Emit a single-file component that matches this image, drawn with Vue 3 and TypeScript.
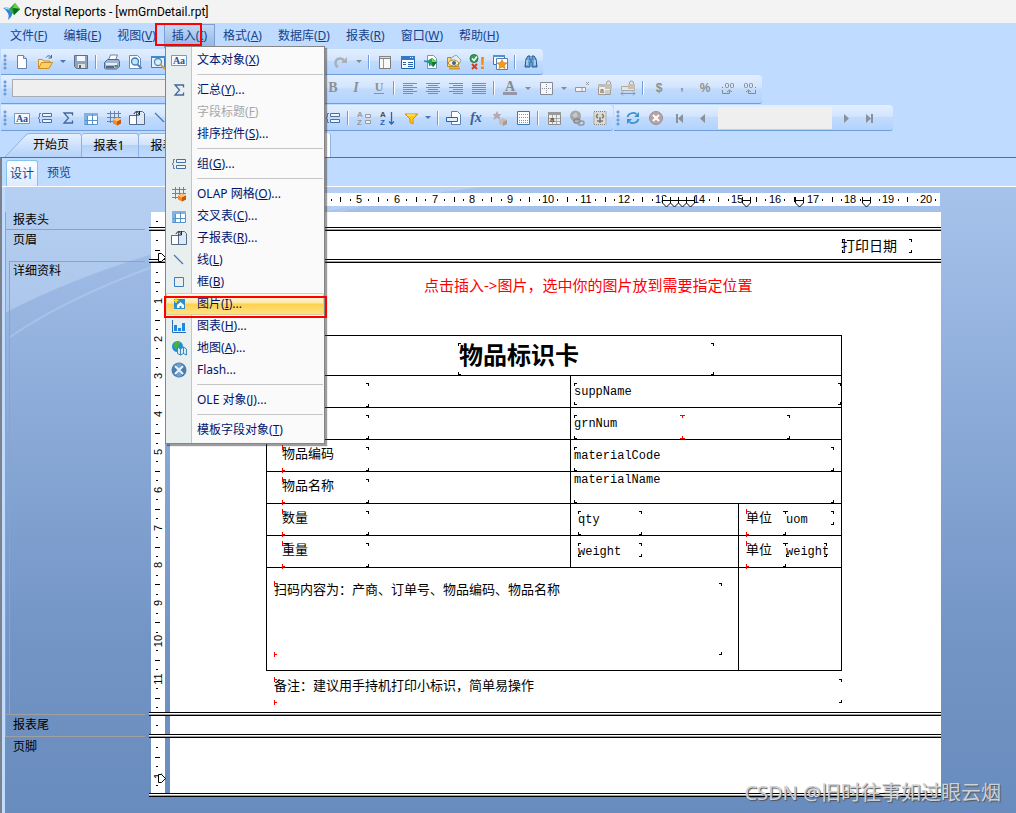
<script setup lang="ts">
interface Tool { icon?: string; kind?: 'sep' | 'caret' | 'spare'; off?: boolean; label?: string }
interface MenuEntry { text?: string; key?: string; tail?: string; icon?: string; off?: boolean; hot?: boolean }
interface Field { x: number; y: number; text: string; kind?: string }
type Mark = [number, number, string]

const icons: Record<string, string> = {
  new: '<path d="M3.5 1.5h6l3 3v10h-9z" fill="#fff" stroke="#6484ae"/><path d="M9.500 1.500v3h3" fill="#cfe0f5" stroke="#6484ae"/>',
  open: '<path d="M1.500 14.500v-9h4l1 1.500h6v2" fill="#ffe9a0" stroke="#c98f2c"/><path d="M1.500 14.500l3-6h11l-3.500 6z" fill="#ffcf5e" stroke="#c98f2c"/><path d="M9 3.500c2-2.500 4-2 5.500 0M14.500 1v3h-3" fill="none" stroke="#44658f"/>',
  save: '<path d="M1.500 1.500h13v13h-11l-2-2z" fill="#8ea3c0" stroke="#5a7092"/><path d="M4 2h8v5h-8z" fill="#f4f7fb"/><path d="M5 10h7v4h-7z" fill="#e4e2d8"/><path d="M6 11h2v3h-2z" fill="#4d6384"/>',
  print: '<path d="M4.500 6l2-5h7l-2 5z" fill="#fff" stroke="#6b83a5"/><path d="M.500 8.500l3-3h11l1 2v5l-3 2.500h-11l-1-1z" fill="#9fb4d0" stroke="#51698d"/><path d="M2 9h11v2h-11z" fill="#e8edf5"/><path d="M11 11h3v2h-3z" fill="#29a94a"/><path d="M2 12h8v2h-8z" fill="#51698d"/>',
  preview: '<path d="M2.500 1.500h8l3 3v10h-11z" fill="#fff" stroke="#6d8db8"/><circle cx="8" cy="7.500" r="3.500" fill="#bfe4fa" stroke="#3d7cba" stroke-width="1.300"/><path d="M10.500 10.500l4 4" stroke="#4d7fb8" stroke-width="2"/>',
  find2: '<path d="M1.500 2.500h13v11h-13z" fill="#e6f1fc" stroke="#3f7dbb"/><path d="M1 2h14v2h-14z" fill="#3f8bcf"/><circle cx="8" cy="8" r="3.500" fill="#d8effc" stroke="#4d8bbd" stroke-width="1.300"/><path d="M10.500 10.500l4.500 4.500" stroke="#e09b32" stroke-width="2"/>',
  redo: '<path d="M5 13a4.500 4.500 0 1 1 6-6" fill="none" stroke="#a9b0ba" stroke-width="2.500"/><path d="M14 3v6h-6z" fill="#a9b0ba"/>',
  panel: '<path d="M2.500 2.500h11v12h-11z" fill="#f8f8f8" stroke="#7c7c7c"/><path d="M2 2h12v3h-12z" fill="#858585"/><path d="M3 3h10v1h-10z" fill="#ddd"/><path d="M6.500 5v9" stroke="#999"/>',
  explorer: '<path d="M1.500 2.500h13v12h-13z" fill="#fff" stroke="#2165ad"/><path d="M1 2h14v4h-14z" fill="#3579c5"/><path d="M10 3h1v1h-1zM12 3h1v1h-1z" fill="#fff"/><path d="M3 8.500h3M8 8.500h5M3 10.500h3M8 10.500h5M8 12.500h5" stroke="#2464b0"/>',
  export: '<path d="M4.500 1.500h6l3 3v10h-9z" fill="#fff" stroke="#7694b9"/><path d="M4 7l5-3 5 4-4 5-3-3z" fill="#1da84a"/><path d="M9 4l5 4-5 0z" fill="#7ad45b"/><path d="M9 8h5l-4 5z" fill="#0e7436"/><path d="M1 7l5 1 1 4" fill="none" stroke="#287fd1" stroke-width="1.500"/>',
  fieldx: '<path d="M1.500 12.500v-9h5l1 2h5v7z" fill="#ffd869" stroke="#bd8528"/><path d="M5 4l5-3 5 5-2 4-8-2z" fill="#d9f0fb" stroke="#87a7bd"/><path d="M2 9c3-4 8-4 11 0-3 4-8 4-11 0z" fill="#fff4cb" stroke="#b88533"/><circle cx="8" cy="9" r="2" fill="#34699e"/><path d="M3 14.500h11" stroke="#d09c21" stroke-width="2"/>',
  check: '<circle cx="5" cy="4.500" r="4" fill="#3a9e59" stroke="#267544"/><path d="M3 4.500l2 2 3-4" fill="none" stroke="#fff" stroke-width="1.500"/><path d="M3 10l5 5M8 10l-5 5" stroke="#e23a10" stroke-width="2"/><path d="M12 3h3l-.5 8h-2zM12 12.500h3v2.500h-3z" fill="#ef8f0b"/>',
  star: '<path d="M1.500 1.500h11v9h-11z" fill="#fff" stroke="#3579bd"/><path d="M1 1h12v2h-12z" fill="#4d94d8"/><path d="M4.500 4.500h11v11h-11z" fill="#fff" stroke="#5b7fa8"/><path d="M10 5.500l1.500 3 3.500.5-2.500 2.300.6 3.200-3.100-1.500-3.100 1.500.6-3.200L5 9l3.500-.5z" fill="#f29a1c" stroke="#c36f11" stroke-width=".5"/>',
  binoculars: '<path d="M2 13l1-8 2-3h2v4h2v-4h2l2 3 1 8h-5v-5h-2v5z" fill="#72a7da" stroke="#1d568f"/><path d="M4 6v5M12 6v5" stroke="#dcf0ff"/>',
  bold: '<text x="8" y="12" text-anchor="middle" font-family="Liberation Serif,serif" font-size="14" font-weight="700" fill="#8c9097">B</text>',
  italic: '<text x="8" y="12" text-anchor="middle" font-family="Liberation Serif,serif" font-size="14" font-weight="700" font-style="italic" fill="#8c9097">I</text>',
  under: '<text x="8" y="11" text-anchor="middle" font-family="Liberation Serif,serif" font-size="12" font-weight="700" fill="#8c9097">U</text><path d="M3 13.500h10" stroke="#8c9097"/>',
  left: '<path d="M1 3.500h14M1 5.500h10M1 7.500h14M1 9.500h10M1 11.500h14M1 13.500h10" stroke="#858b94"/>',
  center: '<path d="M1 3.500h14M3 5.500h10M1 7.500h14M3 9.500h10M1 11.500h14M3 13.500h10" stroke="#858b94"/>',
  right: '<path d="M1 3.500h14M5 5.500h10M1 7.500h14M5 9.500h10M1 11.500h14M5 13.500h10" stroke="#858b94"/>',
  justify: '<path d="M1 3.500h14M1 5.500h14M1 7.500h14M1 9.500h14M1 11.500h14M1 13.500h14" stroke="#858b94"/>',
  color: '<text x="8" y="11" text-anchor="middle" font-family="Liberation Serif,serif" font-size="14" font-weight="700" fill="#858b94">A</text><path d="M1 12h14v3h-14z" fill="#9795a9"/>',
  border: '<path d="M2.500 2.500h12v12h-12z" fill="#f4f6f9" stroke="#858b94"/><path d="M8.500 4v9M4 8.500h9" stroke="#858b94" stroke-dasharray="1 1"/>',
  hide: '<path d="M1.500 7.500h10v4h-10z" fill="#f4f4f4" stroke="#999"/><path d="M8 8v4M12 2l3 3M15 2l-3 3" stroke="#999"/>',
  lockf: '<path d="M1.500 4.500h12v10h-12z" fill="#eee" stroke="#999"/><path d="M1 4h13v3h-13z" fill="#bbb"/><text x="3" y="13" font-family="Liberation Sans,sans-serif" font-size="7" font-weight="700" fill="#777">a</text><path d="M8 11h6M8 13h6" stroke="#aaa"/><path d="M9.500 5v-2a2 2 0 0 1 4 0v2" fill="none" stroke="#a29b90"/><path d="M8 4h7v5h-7z" fill="#c9c0b3"/>',
  locks: '<path d="M1.500 6.500h13v4h-13z" fill="#e5e5e5" stroke="#aaa"/><path d="M9.500 4v-1a2 2 0 0 1 4 0v1" fill="none" stroke="#a29b90"/><path d="M8 4h7v5h-7z" fill="#c9c0b3"/><path d="M1 13.500h14M3 11.500l-2 2 2 2M13 11.500l2 2-2 2" fill="none" stroke="#8e949d"/>',
  money: '<text x="8" y="12" text-anchor="middle" font-family="Liberation Sans,sans-serif" font-size="12" font-weight="700" fill="#8c9097">$</text>',
  comma: '<text x="8" y="10" text-anchor="middle" font-family="Liberation Sans,sans-serif" font-size="12" font-weight="700" fill="#8c9097">,</text>',
  percent: '<text x="8" y="12" text-anchor="middle" font-family="Liberation Sans,sans-serif" font-size="12" font-weight="700" fill="#8c9097">%</text>',
  decup: '<path d="M2 7h1v1h-1z" fill="#777"/><rect x="5.500" y="3.500" width="3" height="4" rx="1" fill="none" stroke="#888"/><rect x="10.500" y="3.500" width="3" height="4" rx="1" fill="none" stroke="#888"/><path d="M2.500 10v3.500h7v-3M7 12l2.500-2 2.500 2" fill="none" stroke="#888"/>',
  decdown: '<path d="M12 7h1v1h-1z" fill="#777"/><rect x="1.500" y="3.500" width="3" height="4" rx="1" fill="none" stroke="#888"/><rect x="6.500" y="3.500" width="3" height="4" rx="1" fill="none" stroke="#888"/><path d="M12.500 10v3.500h-7v-3M3 12l2.500-2 2.500 2" fill="none" stroke="#888"/>',
  text: '<path d="M.5 3.500h15v10h-15z" fill="#f7fbff" stroke="#6d9ccd"/><text x="8" y="12" text-anchor="middle" font-family="Liberation Serif,serif" font-size="10" font-weight="700" fill="#2e5186">Aa</text>',
  group: '<path d="M4 3.500h-1.500v3.500l-1.500 1 1.500 1v3.500h1.500" fill="none" stroke="#5c79a5"/><path d="M5.500 3.500h9v3h-9zM5.500 9.500h9v3h-9z" fill="#eef5fd" stroke="#4b6ea0"/>',
  sum: '<path d="M12.500 5.500v-2.500h-8.500l4.500 5-4.500 5h8.500v-2.500" fill="none" stroke="#46679b" stroke-width="1.300"/>',
  cross: '<path d="M1.500 3.500h13v11h-13z" fill="#fff" stroke="#5593cd"/><path d="M1 3h14v3h-14zM1 3h3v11h-3z" fill="#7fb3e3"/><path d="M4.500 6v8M9.500 4v10M2 10.500h12" stroke="#5593cd"/>',
  olap: '<path d="M4.500 1v12M8.500 1v12M12.500 1v7M1 3.500h14M1 7.500h14M1 11.500h7" stroke="#6482b0"/><path d="M7 9.500l4-2 4 2v4l-4 2-4-2z" fill="#f28b2c"/><path d="M7 9.500l4-2 4 2-4 2z" fill="#ffc67a"/><path d="M11 11.500l4-2v4l-4 2z" fill="#c95413"/>',
  sub: '<path d="M7.500 1.500h6l2 2v11h-8z" fill="#dfe9f5" stroke="#51698d"/><path d="M.500 5.500h7v9h-7z" fill="#fff" stroke="#51698d"/><path d="M5 4c1-3 4-3 5 0M10.500 1v4h-3.500" fill="none" stroke="#222"/>',
  line: '<path d="M3 3l9 9" stroke="#4678b4" stroke-width="1.200"/>',
  box: '<path d="M3.500 3.500h9v9h-9z" fill="none" stroke="#3b7fc4"/>',
  picture: '<path d="M3 3h11v10h-11z" fill="#2c8dd2"/><path d="M6 12v-3l3.500-3 3.500 3v3h-2.500v-2h-2v2z" fill="#fff"/><path d="M5 2v5M2.500 4.500h5" stroke="#ffe22d" stroke-width="1.500"/>',
  chart: '<path d="M1.500 2v12.500h13.500" fill="none" stroke="#2b6cb4"/><path d="M3 7h3v6h-3zM7 10h3v3h-3zM11 5h3v8h-3z" fill="#1e88e5"/>',
  map: '<circle cx="6.500" cy="6.500" r="5.500" fill="#2b8bd6"/><path d="M3 3l4-2 3 2-3 2 1 3-3 1-2-3z" fill="#46b438"/><path d="M6.500 7l3 2 3-2 3 2v6l-3-1.500-3 1.500-3-1.500z" fill="#d4edfb" stroke="#3b8ab8"/><path d="M9.500 9v6M12.500 7v7" stroke="#3b8ab8"/>',
  flash: '<circle cx="8" cy="8" r="7.500" fill="#4b7cab"/><path d="M8 8l-3-6.500h6zM8 8l-3 6.500h6z" fill="#6fa2cf"/><path d="M4 4l8 8M12 4l-8 8" stroke="#e5f2fc" stroke-width="2.200"/>',
  azlist: '<text x="1" y="7" font-family="Liberation Sans,sans-serif" font-size="8" font-weight="700" fill="#999">A</text><text x="1" y="15" font-family="Liberation Sans,sans-serif" font-size="8" font-weight="700" fill="#999">Z</text><path d="M9.500 4.500h5v3h-5zM9.500 10.500h5v3h-5z" fill="#eee" stroke="#999"/>',
  az: '<text x="1" y="7" font-family="Liberation Sans,sans-serif" font-size="8" font-weight="700" fill="#4d4d4d">A</text><text x="1" y="15" font-family="Liberation Sans,sans-serif" font-size="8" font-weight="700" fill="#2c66ab">Z</text><path d="M12.500 2v12M10 11.500l2.500 2.500 2.500-2.500" fill="none" stroke="#2c66ab" stroke-width="1.300"/>',
  filter: '<path d="M3 4h13l-5 5v5l-3-1.500v-3.500z" fill="#ffc90e" stroke="#db8d0a"/><path d="M5 5h8" stroke="#fff3a6"/>',
  section: '<path d="M5.500 1.500h6l3 3v10h-9z" fill="#fff" stroke="#5b84b1"/><path d="M.5 7.500h11v4h-11z" fill="#e0efff" stroke="#2f5f9b"/>',
  fx: '<text x="7" y="12" text-anchor="middle" font-family="Liberation Serif,serif" font-size="14" font-style="italic" font-weight="700" fill="#3c5f93">fx</text>',
  wizard: '<path d="M5 1l1.500 3h3l-2 2 1 4-3.500-2-3.500 2 1-4-2-2h3z" fill="#b7a7b1"/><path d="M7 10l4-2 4 2v4l-4 2-4-2z" fill="#c7bdb4"/><path d="M11 12l4-2v4l-4 2z" fill="#a79c94"/>',
  grid: '<path d="M2.500 1.500h12v13h-12z" fill="#fff" stroke="#3c76b4"/><path d="M4 4.500h9M4 7.500h9M4 10.500h9M4 12.500h9" stroke="#5fa0d8" stroke-dasharray="1 1"/>',
  tablea: '<path d="M2.500 2.500h12v12h-12z" fill="#eee" stroke="#8d8d8d"/><path d="M2 2h13v3h-13z" fill="#9a9a9a"/><path d="M6.500 5v9M10.500 5v9M3 8.500h11M3 11.500h11" stroke="#aaa"/><text x="4" y="12" font-family="Liberation Sans,sans-serif" font-size="8" font-weight="700" fill="#555">a</text>',
  link: '<circle cx="6.500" cy="6" r="5.500" fill="#a4a8ab"/><path d="M3 5l4-3 2 4-3 2z" fill="#c5c9c5"/><rect x="5" y="9" width="6" height="4" rx="2" fill="none" stroke="#888" stroke-width="1.500"/><rect x="9" y="11" width="6" height="4" rx="2" fill="none" stroke="#999" stroke-width="1.500"/>',
  stamp: '<path d="M2 1.500h12v13h-12z" fill="#dcdcd4" stroke="#85857d" stroke-dasharray="1 1"/><path d="M6 4c-2 2-2 3 0 4M10 4c2 2 2 3 0 4M5 11h6M8 7v6" fill="none" stroke="#777" stroke-width="1.500"/>',
  refresh: '<path d="M2.500 7c1-4 6-5 9-3M13.500 9c-1 4-6 5-9 3" fill="none" stroke="#3a91cd" stroke-width="1.700"/><path d="M14 2v5h-5zM2 14v-5h5z" fill="#3a91cd"/>',
  stop: '<circle cx="8" cy="8" r="6.500" fill="#b5a3a5" stroke="#a08f92"/><path d="M5 5l6 6M11 5l-6 6" stroke="#fff" stroke-width="2"/>',
  first: '<path d="M5 4h2v9h-2zM12 4v9l-5-4.500z" fill="#8b919b"/>',
  prev: '<path d="M11 4v9l-5-4.500z" fill="#8b919b"/>',
  next: '<path d="M5 4v9l5-4.500z" fill="#8b919b"/>',
  last: '<path d="M4 4v9l5-4.500zM9 4h2v9h-2z" fill="#8b919b"/>',
}

const b = (icon: string, label = icon): Tool => ({ icon, label })
const sep: Tool = { kind: 'sep' }
const caret: Tool = { kind: 'caret' }
const caretOff: Tool = { kind: 'caret', off: true }

const standard: Tool[] = [
  b('new', '新建'), b('open', '打开'), caret, b('save', '保存'), sep, b('print', '打印'), b('preview', '打印预览'), b('find2', '网页预览'),
  { kind: 'spare' }, b('redo', '重做'), caretOff, sep, b('panel'), b('explorer'), b('export', '导出'), b('fieldx'), b('check'), b('star'), sep, b('binoculars', '查找'),
]
const format: Tool[] = [
  b('bold', '粗体'), b('italic', '斜体'), b('under', '下划线'), sep, b('left'), b('center'), b('right'), b('justify'), sep,
  b('color', '字体颜色'), caretOff, b('border', '边框'), caretOff, b('hide'), b('lockf'), b('locks'), sep,
  b('money'), b('comma'), b('percent'), b('decup'), b('decdown'),
]
const insert: Tool[] = [
  b('text', '文本对象'), b('group', '组'), b('sum', '汇总'), b('cross', '交叉表'), b('olap', 'OLAP 网格'), b('sub', '子报表'), b('line', '线'),
  { kind: 'spare' }, b('group', '组专家'), sep, b('azlist'), b('az', '排序'), b('filter', '筛选'), caret, sep,
  b('section'), b('fx', '公式'), b('wizard'), b('grid'), sep, b('tablea'), b('link'), b('stamp'),
]

const menus = [
  ['文件', 'F'], ['编辑', 'E'], ['视图', 'V'], ['插入', 'I'], ['格式', 'A'], ['数据库', 'D'], ['报表', 'R'], ['窗口', 'W'], ['帮助', 'H'],
]

const popup: MenuEntry[] = [
  { text: '文本对象', key: 'X', icon: 'text' }, {},
  { text: '汇总', key: 'Y', tail: '...', icon: 'sum' },
  { text: '字段标题', key: 'F', off: true },
  { text: '排序控件', key: 'S', tail: '...' }, {},
  { text: '组', key: 'G', tail: '...', icon: 'group' }, {},
  { text: 'OLAP 网格', key: 'O', tail: '...', icon: 'olap' },
  { text: '交叉表', key: 'C', tail: '...', icon: 'cross' },
  { text: '子报表', key: 'R', tail: '...', icon: 'sub' },
  { text: '线', key: 'L', icon: 'line' },
  { text: '框', key: 'B', icon: 'box' },
  { text: '图片', key: 'I', tail: '...', icon: 'picture', hot: true },
  { text: '图表', key: 'H', tail: '...', icon: 'chart' },
  { text: '地图', key: 'A', tail: '...', icon: 'map' },
  { text: 'Flash...', icon: 'flash' }, {},
  { text: 'OLE 对象', key: 'J', tail: '...' }, {},
  { text: '模板字段对象', key: 'T' },
]

const QUARTER = 9.45
const ticks = (len: number) =>
  Array.from({ length: Math.floor((len - 3) / QUARTER) }, (_, i) => i + 1).map((k) => ({
    at: Math.round(k * QUARTER),
    num: k % 4 === 0 ? k / 4 : 0,
    long: k % 4 === 2,
  }))
// The open menu covers everything before the fifth centimetre.
const across = ticks(774).filter((t) => t.at > 155)
const tabStops = [496, 504, 512, 520, 576, 629, 696]

const corner = (x: number, y: number, k: string): string => {
  const p: Record<string, string> = {
    tl: `M${x} ${y}h3v1h-2v2h-1z`,
    bl: `M${x} ${y + 1}h3v-1h-2v-2h-1z`,
    tr: `M${x + 1} ${y}h-3v1h2v2h1z`,
    br: `M${x + 1} ${y + 1}h-3v-1h2v-2h1z`,
    side: `M${x} ${y - 2}h1v2h2v1h-2v2h-1z`,
    top: `M${x - 2} ${y}h5v1h-2v2h-1v-2h-2z`,
    foot: `M${x - 2} ${y + 1}h5v-1h-2v-2h-1v2h-2z`,
  }
  return p[k]
}
const box = (x1: number, y1: number, x2: number, y2: number): Mark[] => [
  [x1, y1, 'tl'], [x1, y2, 'bl'], [x2, y1, 'tr'], [x2, y2, 'br'],
]
const path = (m: Mark[]) => m.map((v) => corner(...v)).join('')

const rowTops = [120, 152, 184, 216, 248, 280]
const detailMarks = path([
  ...box(288, 80, 543, 111),
  ...rowTops.flatMap((y): Mark[] => [[198, y, 'tr'], [198, y + 23, 'br']]),
  ...box(404, 120, 670, 141), ...box(404, 152, 619, 175), ...box(404, 184, 663, 207),
  [404, 239, 'bl'], [663, 239, 'br'],
  ...box(408, 248, 471, 271), ...box(408, 280, 471, 293),
  [615, 248, 'top'], [615, 271, 'br'], [663, 248, 'tr'], [663, 261, 'br'],
  [615, 280, 'top'], [616, 293, 'bl'], [615, 303, 'br'], [656, 280, 'tr'], [656, 293, 'br'],
  [551, 320, 'tr'], [551, 391, 'br'], [671, 416, 'tr'], [671, 439, 'br'],
])
const redMarks = path([
  ...rowTops.slice(2).flatMap((y): Mark[] => [[112, y, 'side'], [112, y + 23, 'side']]),
  ...rowTops.slice(4).flatMap((y): Mark[] => [[576, y, 'side'], [576, y + 23, 'side']]),
  [512, 152, 'top'], [512, 175, 'foot'],
  [104, 320, 'side'], [104, 391, 'side'], [104, 416, 'side'], [104, 439, 'side'],
])
const headMarks = path(box(672, 8, 741, 21))

const fields: Field[] = [
  { x: 289, y: 79, text: '物品标识卡', kind: 'heading' },
  { x: 112, y: 183, text: '物品编码' }, { x: 112, y: 215, text: '物品名称' },
  { x: 112, y: 247, text: '数量' }, { x: 112, y: 279, text: '重量' },
  { x: 404, y: 123, text: 'suppName', kind: 'mono' }, { x: 404, y: 155, text: 'grnNum', kind: 'mono' },
  { x: 404, y: 187, text: 'materialCode', kind: 'mono' }, { x: 404, y: 211, text: 'materialName', kind: 'mono' },
  { x: 408, y: 251, text: 'qty', kind: 'mono' }, { x: 408, y: 283, text: 'weight', kind: 'mono' },
  { x: 576, y: 247, text: '单位' }, { x: 576, y: 279, text: '单位' },
  { x: 616, y: 251, text: 'uom', kind: 'mono' }, { x: 616, y: 283, text: 'weight', kind: 'mono' },
  { x: 104, y: 319, text: '扫码内容为：产商、订单号、物品编码、物品名称' },
  { x: 104, y: 415, text: '备注：建议用手持机打印小标识，简单易操作' },
  { x: 254, y: 15, text: '点击插入->图片，选中你的图片放到需要指定位置', kind: 'hint' },
]
const rules =
  'M96 72h576v1h-576zM96 407h576v1h-576zM96 72h1v336h-1zM671 72h1v336h-1z' +
  [112, 144, 176, 208, 240, 272, 304].map((y) => `M96 ${y}h576v1h-576z`).join('') +
  'M400 112h1v192h-1zM568 240h1v168h-1z'

const sections = [
  { name: '报表头', cls: 'rh', h: 15, stop: 0 },
  { name: '页眉', cls: 'ph', h: 28, stop: 26 },
  { name: '详细资料', cls: 'de', h: 449, stop: 0 },
  { name: '报表尾', cls: 'rf', h: 18, stop: 0 },
  { name: '页脚', cls: 'pf', h: 55, stop: 40 },
]
</script>

<template>
  <div class="app">
    <header class="title">
      <svg width="17" height="17" viewBox="0 0 17 17" aria-hidden="true">
        <path d="M0 5c5-1 8 1 9 4 1 3-1 5-4 8 1-4 1-6-1-8-1-2-2-3-4-4z" fill="#2f83d6" />
        <path d="M2 5c3 0 6 1 7 4" fill="none" stroke="#9fd0f7" stroke-width="2" />
        <path d="M6 6l6-6 5 6-6 6z" fill="#25a33b" />
        <path d="M12 0l-2 5 7 1z" fill="#6cd24e" />
        <path d="M10 5l7 1-6 6z" fill="#0c6b22" />
      </svg>
      <span>Crystal Reports - [wmGrnDetail.rpt]</span>
    </header>

    <nav class="menubar">
      <button v-for="m in menus" :key="m[1]" type="button" :class="{ open: m[1] === 'I' }">{{ m[0] }}(<u>{{ m[1] }}</u>)</button>
      <span class="callout callout-bar"></span>
      <div class="popup" role="menu">
        <template v-for="(e, i) in popup" :key="i">
          <button v-if="e.text" type="button" role="menuitem" :disabled="e.off" :class="{ hot: e.hot }">
            <span class="pic"><svg v-if="e.icon" width="16" height="16" viewBox="0 0 16 16" v-html="icons[e.icon]"></svg></span>
            <span>{{ e.text }}<template v-if="e.key">(<u>{{ e.key }}</u>)</template>{{ e.tail }}</span>
          </button>
          <div v-else class="rule"></div>
        </template>
        <span class="callout callout-item"></span>
      </div>
    </nav>

    <div class="bars">
      <div class="bar one" role="toolbar" aria-label="标准">
        <i class="grip"></i>
        <template v-for="(t, i) in standard" :key="i">
          <i v-if="t.kind" :class="[t.kind, { off: t.off }]"></i>
          <button v-else type="button" :aria-label="t.label"><svg width="16" height="16" viewBox="0 0 16 16" v-html="icons[t.icon!]"></svg></button>
        </template>
      </div>
      <div class="bar two" role="toolbar" aria-label="格式">
        <i class="grip"></i>
        <select aria-label="字体" class="font"></select>
        <template v-for="(t, i) in format" :key="i">
          <i v-if="t.kind" :class="[t.kind, { off: t.off }]"></i>
          <button v-else type="button" :aria-label="t.label"><svg width="16" height="16" viewBox="0 0 16 16" v-html="icons[t.icon!]"></svg></button>
        </template>
      </div>
      <div class="pair">
        <div class="bar three" role="toolbar" aria-label="插入">
          <i class="grip"></i>
          <template v-for="(t, i) in insert" :key="i">
            <i v-if="t.kind" :class="[t.kind, { off: t.off }]"></i>
            <button v-else type="button" :aria-label="t.label"><svg width="16" height="16" viewBox="0 0 16 16" v-html="icons[t.icon!]"></svg></button>
          </template>
        </div>
        <div class="bar four" role="toolbar" aria-label="导航">
          <i class="grip"></i>
          <button v-for="n in ['refresh', 'stop', 'first', 'prev']" :key="n" type="button" :aria-label="n"><svg width="16" height="16" viewBox="0 0 16 16" v-html="icons[n]"></svg></button>
          <input type="text" class="pageno" aria-label="页码" />
          <button v-for="n in ['next', 'last']" :key="n" type="button" :aria-label="n"><svg width="16" height="16" viewBox="0 0 16 16" v-html="icons[n]"></svg></button>
        </div>
      </div>
    </div>

    <div class="tabs">
      <button type="button" class="start">
        <svg width="77" height="24" viewBox="0 0 77 24" aria-hidden="true">
          <defs><linearGradient id="tabfill" x1="0" y1="0" x2="0" y2="1"><stop offset="0" stop-color="#e6f1ff" /><stop offset="1" stop-color="#b4d2f9" /></linearGradient></defs>
          <path d="M0 24L20 3q2-2.500 5-2.500h49q2.500 0 2.500 3v20.500" fill="url(#tabfill)" stroke="#8db2e3" />
        </svg>
        <span>开始页</span>
      </button>
      <button type="button">报表1</button>
      <button type="button">报表2</button>
      <span class="rest"></span>
    </div>

    <main class="frame">
      <div class="views">
        <button type="button" class="on">设计</button>
        <button type="button">预览</button>
      </div>
      <div class="design">
        <svg class="swoosh" width="490" height="160" viewBox="0 0 490 160" aria-hidden="true">
          <path d="M0 0h475Q162 41 0 126z" fill="#d4e9ff" opacity=".35" />
          <path d="M5 150Q110 77 355 19" fill="none" stroke="#c7defa" stroke-width="2" opacity=".35" />
        </svg>
        <aside class="names">
          <div v-for="s in sections" :key="s.cls" :class="s.cls">{{ s.name }}</div>
        </aside>
        <div class="work">
          <svg class="hruler" width="771" height="13" viewBox="0 0 771 13">
            <rect width="770" height="13" fill="#fff" />
            <template v-for="t in across" :key="t.at">
              <text v-if="t.num" :x="t.at" y="10" text-anchor="middle">{{ t.num }}</text>
              <rect v-else-if="t.long" :x="t.at" y="4" width="1" height="5" />
              <rect v-else :x="t.at" y="6" width="1" height="2" />
            </template>
            <path v-for="s in tabStops" :key="s" :d="`M${s - 4}.5 4v6l4 4 4-4v-6M${s - 4}.5 7.500h8`" fill="#fff" stroke="#000" />
          </svg>
          <section v-for="s in sections" :key="s.cls" class="section">
            <div class="strip">
              <svg class="vruler" width="14" :height="s.h">
                <template v-for="t in ticks(s.h + 2)" :key="t.at">
                  <text v-if="t.num" :transform="`translate(11 ${t.at}) rotate(-90)`" text-anchor="middle">{{ t.num }}</text>
                  <rect v-else-if="t.long" x="4" :y="t.at" width="5" height="1" />
                  <rect v-else x="5" :y="t.at" width="2" height="1" />
                </template>
                <path v-if="s.stop" :d="`M7.500 ${s.stop - 4}.5h3l4 4-4 4h-3z`" fill="#fff" stroke="#000" />
              </svg>
              <div class="paper">
                <template v-if="s.cls === 'ph'">
                  <svg class="lines" width="771" height="28"><path :d="headMarks" /></svg>
                  <span class="field date">打印日期</span>
                </template>
                <template v-if="s.cls === 'de'">
                  <svg class="lines" width="771" height="449">
                    <path :d="rules" /><path :d="detailMarks" /><path :d="redMarks" class="red" />
                  </svg>
                  <span v-for="(f, i) in fields" :key="i" class="field" :class="f.kind" :style="{ left: f.x + 'px', top: f.y + 'px' }">{{ f.text }}</span>
                </template>
              </div>
            </div>
            <div class="split"></div>
          </section>
        </div>
        <p class="mark">CSDN @旧时往事如过眼云烟</p>
      </div>
    </main>
  </div>
</template>

<style>
body { margin: 0; background: #bfdbff; }
</style>

<style scoped>
.app {
  min-height: 100vh; display: flex; flex-direction: column; background: #bfdbff;
  font: 12px/16px "Noto Sans", "Noto Sans CJK SC", sans-serif; color: #000;
}
.app * { box-sizing: border-box; }
button { font: inherit; color: inherit; background: none; border: 0; padding: 0; margin: 0; white-space: nowrap; }
svg { display: block; flex: none; }
.title { height: 23px; display: flex; align-items: center; gap: 4px; padding-left: 3px; background: #f3f3f3; font-family: Roboto, "Noto Sans", sans-serif; }

.menubar { position: relative; height: 26px; display: flex; align-items: center; padding: 0 2px; color: #15428b; }
.menubar > button { height: 22px; padding: 0 8px; }
.menubar > button.open { height: 24px; background: linear-gradient(#c3daf6, #90b5e6); box-shadow: inset 0 0 0 1px #7b9fd0; }
.callout { position: absolute; border: 2px solid #f00; pointer-events: none; }
.callout-bar { left: 155px; top: 0; width: 47px; height: 23px; z-index: 6; }
.popup {
  position: absolute; left: 165px; top: 23px; width: 160px; z-index: 5; padding: 2px 0;
  border: 1px solid #868686; color: #00156e;
  background: linear-gradient(90deg, #e9eeee 25px, #c5c5c5 25px, #c5c5c5 26px, #fafafa 26px);
  box-shadow: 2px 2px 1px rgba(60, 60, 60, .5);
}
.popup button { display: flex; align-items: center; width: 100%; height: 22px; text-align: left; }
.popup button:disabled { color: #a7a7a7; }
.pic { width: 31px; padding-left: 5px; }
.popup .hot { background: linear-gradient(#fffbe6 10%, #ffe9a6 45%, #ffd24b 50%, #ffe38a); box-shadow: inset 0 0 0 1px #dbce99; border-radius: 2px; }
.rule { height: 8px; padding: 3px 1px 4px 31px; }
.rule::after { content: ""; display: block; height: 1px; background: #c5c5c5; }
.callout-item { left: -2px; top: 249px; width: 163px; height: 22px; }

.bars { display: flex; flex-direction: column; align-items: flex-start; padding-left: 1px; }
.bar {
  display: flex; align-items: center; border-bottom: 1px solid #6f9ddb; border-radius: 0 4px 3px 0;
  background: linear-gradient(#e3efff, #d2e4fd 45%, #c2dbfc 50%, #b2d3ff);
}
.bar button { width: 23px; height: 22px; display: flex; align-items: center; justify-content: center; }
.one { height: 26px; padding-right: 1px; }
.two { height: 29px; padding-bottom: 2px; }
.three { height: 26px; padding-right: 2px; }
.four { height: 26px; padding-right: 12px; margin-left: 1px; }
.pair { display: flex; margin-top: 1px; }
.grip { width: 9px; height: 16px; background: radial-gradient(circle at 4px 2px, #6f9ddb 1px, transparent 2px) 0 0 / 9px 4px; }
.four .grip { width: 7px; }
.sep { width: 8px; height: 14px; background: linear-gradient(90deg, transparent 3px, #6f9ddb 3px, #6f9ddb 4px, #fff 4px, #fff 5px, transparent 5px); }
.caret { width: 13px; height: 14px; display: flex; align-items: center; justify-content: center; }
.caret::after { content: ""; border: 3px solid transparent; border-top-color: #4b76b5; border-bottom: 0; }
.caret.off::after { border-top-color: #858b94; }
.one .spare { width: 160px; }
.three .spare { width: 150px; }
.font { width: 160px; height: 18px; margin: 0 149px 0 2px; border: 1px solid #a9adb3; background: #efefef; appearance: none; }
.pageno { width: 114px; height: 22px; margin: 0 3px 0 5px; border: 0; padding: 0 4px; background: #efefef; font: inherit; }

.tabs { display: flex; align-items: flex-end; height: 26px; padding-left: 5px; }
.tabs button { width: 57px; height: 24px; padding-right: 2px; border: 1px solid #8db2e3; border-width: 1px 1px 0 0; border-radius: 3px 3px 0 0; background: linear-gradient(#e8f2ff, #cfe2fb 50%, #b4d2f9 50%, #c1dbfc); }
.tabs .start { position: relative; width: 77px; border: 0; background: none; padding: 0 0 0 15px; }
.start svg { position: absolute; left: 0; top: 0; }
.start span { position: relative; }
.rest { width: 135px; height: 24px; border-right: 1px solid #8db2e3; border-radius: 0 3px 0 0; background: #fff; }

.frame { flex: 1; display: flex; flex-direction: column; border-top: 1px solid #6d6d6d; border-left: 2px solid #7d828a; }
.views { display: flex; align-items: flex-end; gap: 3px; height: 29px; padding-left: 4px; border-bottom: 1px solid #fff; color: #15428b; }
.views button { width: 36px; height: 26px; }
.views .on { width: 32px; border: 1px solid #86c3ea; border-bottom: 0; border-radius: 3px 3px 0 0; background: linear-gradient(#fff, #dcebff); }

.design { position: relative; flex: 1; display: flex; margin-left: 3px; background: linear-gradient(#a6c3ec, #8cabd8 35%, #7395c6 72%, #688cbd); overflow: hidden; }
.swoosh { position: absolute; left: 0; top: 0; }
.names { position: relative; width: 140px; margin: 25px 4px 0 0; display: flex; flex-direction: column; }
.names div { padding-left: 7px; border: 0 solid #a0a0a0; border-left-width: 1px; }
.names .rh { height: 18px; border-bottom-width: 1px; }
.names .ph { height: 31px; padding-top: 2px; }
.names .de { height: 454px; padding-top: 2px; border-bottom-width: 1px; background: linear-gradient(#a0a0a0, #a0a0a0) 3px 0 / 1px 100% no-repeat, linear-gradient(#a0a0a0, #a0a0a0) 3px 0 / 140px 1px no-repeat; }
.names .rf { height: 22px; padding-top: 2px; border-bottom-width: 1px; }
.names .pf { border-width: 0; padding: 2px 0 0 8px; }

.work { position: relative; padding-top: 6px; }
.hruler { margin: 0 0 6px 21px; overflow: visible; }
text { font: 11px "Liberation Sans", sans-serif; }
.strip { display: flex; gap: 5px; padding-left: 2px; }
.vruler { background: #fff; overflow: visible; }
.paper { position: relative; width: 771px; background: #fff; }
.split { height: 4px; background: linear-gradient(#000 1px, #fff 1px, #fff 2px, #a0a0a0 2px, #a0a0a0 3px, #000 3px); }
.lines { position: absolute; left: 0; top: 0; shape-rendering: crispEdges; }
.red { fill: #f00; }
.field { position: absolute; white-space: nowrap; font: 13px/13px "Noto Sans CJK SC", sans-serif; }
.date { left: 671px; top: 7px; font-size: 14px; line-height: 14px; }
.mono { font: 12px/13px "Liberation Mono", monospace; }
.heading { font: 700 24px/24px "Noto Sans CJK SC", sans-serif; }
.hint { font: 15px/15px "Noto Sans", "Noto Sans CJK SC", sans-serif; color: #f00; }
.mark { position: absolute; right: 15px; bottom: 8px; margin: 0; font: 20px/24px "Noto Sans", "Noto Sans CJK SC", sans-serif; color: #cdd2d8; text-shadow: 1px 1px 1px #555; }
</style>
